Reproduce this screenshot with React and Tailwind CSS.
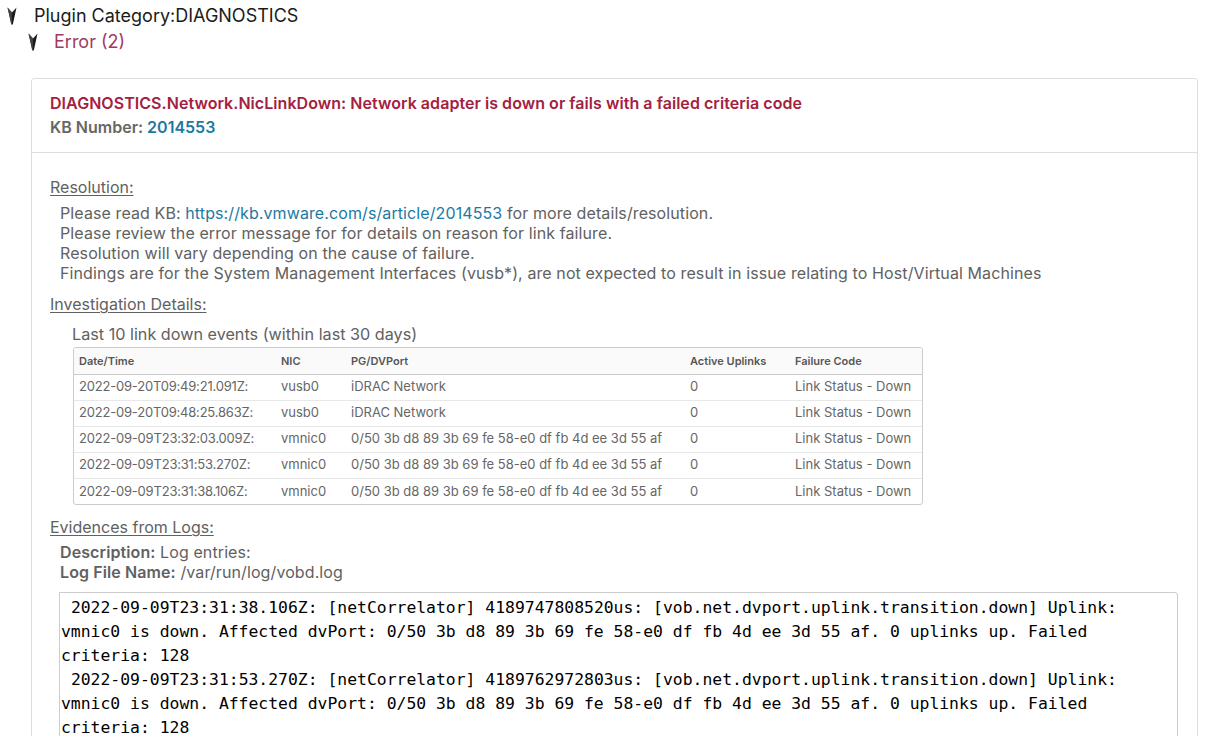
import React from "react";

const Chevron = () => (
  <svg width="10" height="18" viewBox="0 0 10 18" className="shrink-0">
    <polygon points="0.5,0.5 5,5.5 9.5,0.5 5.8,17.5 4.6,17.5" fill="#1b1b1b" />
    <polygon points="0.5,0.5 5,5.5 4.8,17.5 4.2,17.5" fill="#444" />
  </svg>
);

const rows = [
  ["2022-09-20T09:49:21.091Z:", "vusb0", "iDRAC Network", "0", "Link Status - Down"],
  ["2022-09-20T09:48:25.863Z:", "vusb0", "iDRAC Network", "0", "Link Status - Down"],
  ["2022-09-09T23:32:03.009Z:", "vmnic0", "0/50 3b d8 89 3b 69 fe 58-e0 df fb 4d ee 3d 55 af", "0", "Link Status - Down"],
  ["2022-09-09T23:31:53.270Z:", "vmnic0", "0/50 3b d8 89 3b 69 fe 58-e0 df fb 4d ee 3d 55 af", "0", "Link Status - Down"],
  ["2022-09-09T23:31:38.106Z:", "vmnic0", "0/50 3b d8 89 3b 69 fe 58-e0 df fb 4d ee 3d 55 af", "0", "Link Status - Down"],
];

const logs = [
  " 2022-09-09T23:31:38.106Z: [netCorrelator] 4189747808520us: [vob.net.dvport.uplink.transition.down] Uplink: vmnic0 is down. Affected dvPort: 0/50 3b d8 89 3b 69 fe 58-e0 df fb 4d ee 3d 55 af. 0 uplinks up. Failed criteria: 128",
  " 2022-09-09T23:31:53.270Z: [netCorrelator] 4189762972803us: [vob.net.dvport.uplink.transition.down] Uplink: vmnic0 is down. Affected dvPort: 0/50 3b d8 89 3b 69 fe 58-e0 df fb 4d ee 3d 55 af. 0 uplinks up. Failed criteria: 128",
  " 2022-09-09T23:32:03.009Z: [netCorrelator] 4189772711503us: [vob.net.dvport.uplink.transition.down] Uplink: vmnic0 is down. Affected dvPort: 0/50 3b d8 89 3b 69 fe 58-e0 df fb 4d ee 3d 55 af. 0 uplinks up. Failed criteria: 128",
];

export default function App() {
  return (
    <div
      className="h-[736px] w-[1206px] overflow-hidden bg-white text-[#616161]"
      style={{ fontFamily: "Inter, 'Noto Sans', sans-serif" }}
    >
      <div className="flex items-center pl-[7px] pt-[6px] h-[19px] box-content">
        <Chevron />
        <span className="ml-[17px] text-[18px] leading-[19px] text-[#1b1b1b]">Plugin Category:DIAGNOSTICS</span>
      </div>
      <div className="flex items-center pl-[28px] pt-[7px] h-[19px] box-content">
        <Chevron />
        <span className="ml-[16px] text-[18px] leading-[19px] text-[#a13a61]">Error (2)</span>
      </div>

      <div className="ml-[31px] mt-[27px] w-[1167px] rounded-[3px] border border-[#dedede]">
        <div className="border-b border-[#dedede] px-[18px] pt-[12px] pb-[13px]">
          <div className="text-[16px] font-semibold leading-[24px] tracking-[0.05px] text-[#a3213f]">
            DIAGNOSTICS.Network.NicLinkDown: Network adapter is down or fails with a failed criteria code
          </div>
          <div className="text-[16px] font-semibold leading-[24px] text-[#666]">
            KB Number: <span className="text-[#1b7aa3]">2014553</span>
          </div>
        </div>

        <div className="pl-[18px] pt-[24px]">
          <div className="text-[16px] leading-[20px] underline underline-offset-2 decoration-1">Resolution:</div>
          <div className="pl-[10px] pt-[6px] text-[16px] leading-[20px] tracking-[0.1px]">
            <div>
              Please read KB: <span className="text-[#1b7aa3]">https://kb.vmware.com/s/article/2014553</span> for more details/resolution.
            </div>
            <div>Please review the error message for for details on reason for link failure.</div>
            <div>Resolution will vary depending on the cause of failure.</div>
            <div>
              Findings are for the System Management Interfaces (vusb*), are not expected to result in issue relating to Host/Virtual Machines
            </div>
          </div>

          <div className="pt-[11px] text-[16px] leading-[20px] underline underline-offset-2 decoration-1">Investigation Details:</div>
          <div className="pl-[22px] pt-[10px]">
            <div className="text-[16.2px] leading-[20px]">Last 10 link down events (within last 30 days)</div>
            <div className="ml-[1px] mt-[3px] w-[850px] overflow-hidden rounded-[3px] border border-[#cccccc]">
              <table className="w-full border-collapse text-left">
                <colgroup>
                  <col className="w-[202px]" />
                  <col className="w-[70px]" />
                  <col className="w-[339px]" />
                  <col className="w-[105px]" />
                  <col />
                </colgroup>
                <thead>
                  <tr className="h-[26px] bg-[#fafafa] border-b border-[#cccccc] text-[11px] font-semibold text-[#565656]">
                    <th className="pl-[5px] font-semibold">Date/Time</th>
                    <th className="pl-[5px] font-semibold">NIC</th>
                    <th className="pl-[5px] font-semibold">PG/DVPort</th>
                    <th className="pl-[5px] font-semibold">Active Uplinks</th>
                    <th className="pl-[5px] font-semibold">Failure Code</th>
                  </tr>
                </thead>
                <tbody className="text-[13px] text-[#666]">
                  {rows.map((r, i) => (
                    <tr key={i} className={"h-[26px] " + (i < rows.length - 1 ? "border-b border-[#e8e8e8]" : "")}>
                      {r.map((c, j) => (
                        <td key={j} className={j === 0 ? "pl-[5px] whitespace-nowrap tracking-[-0.2px]" : "pl-[5px] whitespace-nowrap"}>{c}</td>
                      ))}
                    </tr>
                  ))}
                </tbody>
              </table>
            </div>
          </div>

          <div className="pt-[12px] text-[16px] leading-[20px] underline underline-offset-2 decoration-1">Evidences from Logs:</div>
          <div className="pl-[10px] pt-[5px] text-[16px] leading-[20px] tracking-[0.1px]">
            <div><span className="font-semibold">Description:</span> Log entries:</div>
            <div><span className="font-semibold">Log File Name:</span> /var/run/log/vobd.log</div>
          </div>
          <div className="ml-[9px] mt-[10px] mr-[19px] rounded-tr-[3px] border border-[#cccccc] pl-[1px] pt-[3px]">
            {logs.map((l, i) => (
              <div
                key={i}
                className="whitespace-pre-wrap text-[16.4px] leading-[24px] text-black"
                style={{ fontFamily: "'DejaVu Sans Mono', 'Liberation Mono', monospace" }}
              >
                {l}
              </div>
            ))}
          </div>
        </div>
      </div>
    </div>
  );
}
